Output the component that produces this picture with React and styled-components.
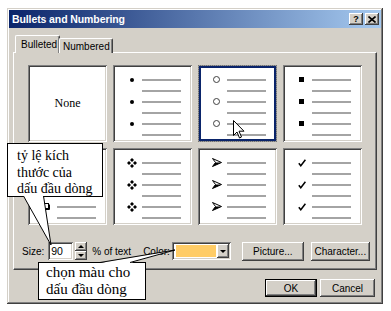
import React from 'react';
import styled, { createGlobalStyle } from 'styled-components';

const Global = createGlobalStyle`
  html, body { margin: 0; padding: 0; background: #fff; }
  body { font-family: "Liberation Sans", Arial, sans-serif; font-size: 10px; color: #000; }
`;

const raised = `box-shadow: inset -1px -1px #404040, inset 1px 1px #fff, inset -2px -2px #808080, inset 2px 2px #d4d0c8;`;
const sunken = `box-shadow: inset 1px 1px #808080, inset -1px -1px #fff, inset 2px 2px #404040, inset -2px -2px #d4d0c8;`;

const Page = styled.div`
  position: relative;
  width: 391px;
  height: 311px;
  padding: 8px 0 0 7px;
  box-sizing: border-box;
  overflow: hidden;
`;

const Dialog = styled.div`
  width: 376px;
  height: 296px;
  box-sizing: border-box;
  background: #d4d0c8;
  padding: 2px;
  box-shadow: inset -1px -1px #404040, inset 1px 1px #d4d0c8, inset -2px -2px #808080, inset 2px 2px #fff;
  display: flex;
  flex-direction: column;
`;

const TitleBar = styled.div`
  height: 18px;
  flex: none;
  display: flex;
  align-items: center;
  padding: 0 2px 0 3px;
  background: linear-gradient(to right, #0a246a, #a6caf0);
`;

const Title = styled.div`
  flex: 1;
  color: #fff;
  font-weight: bold;
  font-size: 10.5px;
  letter-spacing: -0.1px;
`;

const TitleBtn = styled.div`
  width: 14px;
  height: 12px;
  margin-left: 2px;
  background: #d4d0c8;
  ${raised}
  display: flex;
  align-items: center;
  justify-content: center;
  font-weight: bold;
  font-size: 9px;
  line-height: 1;
`;

const Body = styled.div`
  flex: 1;
  display: flex;
  flex-direction: column;
  padding: 8px 4px 0 4px;
`;

const TabStrip = styled.div`
  display: flex;
  align-items: flex-end;
  padding-left: 2px;
  height: 17px;
  position: relative;
  z-index: 1;
  margin-bottom: -1px;
`;

const Tab = styled.div`
  box-sizing: border-box;
  height: ${p => (p.$active ? '18px' : '15px')};
  width: ${p => p.$w}px;
  padding: ${p => (p.$active ? '3px 0 0 5px' : '2px 0 0 3px')};
  margin-left: ${p => (p.$active ? '0' : '-1px')};
  background: #d4d0c8;
  border-top: 1px solid #fff;
  border-left: 1px solid #fff;
  border-right: 1px solid #404040;
  box-shadow: inset -1px 0 #808080;
  border-radius: 2px 2px 0 0;
  font-size: 10px;
  white-space: nowrap;
`;

const Panel = styled.div`
  height: 218px;
  box-sizing: border-box;
  border-top: 1px solid #fff;
  border-left: 1px solid #fff;
  border-right: 1px solid #404040;
  border-bottom: 1px solid #404040;
  box-shadow: inset -1px -1px #808080;
  padding: 12px 0 0 8px;
  display: flex;
  flex-direction: column;
`;

const Grid = styled.div`
  margin-left: 6px;
  display: grid;
  grid-template-columns: repeat(4, 79px);
  grid-template-rows: repeat(2, 77px);
  column-gap: 6px;
  row-gap: 6px;
`;

const Cell = styled.div`
  position: relative;
  box-sizing: border-box;
  background: #fff;
  padding-top: 9px;
  ${p => (p.$selected
    ? 'outline: 1px dotted #707070; outline-offset: -1px; box-shadow: inset 0 0 0 1px #9a9a9a, inset 0 0 0 3px #0a246a;'
    : sunken)}
`;

const NoneCell = styled(Cell)`
  padding: 0;
  display: flex;
  align-items: center;
  justify-content: center;
  font-family: "Liberation Serif", "Times New Roman", serif;
  font-size: 12px;
`;

const Row = styled.div`
  height: 11px;
  display: flex;
  align-items: center;
`;

const BulletSlot = styled.div`
  width: 13px;
  margin-left: 12px;
  display: flex;
  justify-content: center;
  align-items: center;
`;

const Line = styled.div`
  width: 39px;
  height: 2px;
  margin-left: 4px;
  background: #a4a4a4;
`;

const Dot = styled.span`
  width: 4px;
  height: 4px;
  border-radius: 50%;
  background: #000;
`;

const Ring = styled.span`
  width: 5px;
  height: 5px;
  border-radius: 50%;
  border: 1px solid #404040;
`;

const Square = styled.span`
  width: 5px;
  height: 5px;
  background: #000;
`;

const Controls = styled.div`
  margin-top: 17px;
  height: 18px;
  display: flex;
  align-items: center;
`;

const CtlLabel = styled.span`
  margin-left: ${p => p.$ml || 0}px;
  font-size: 10px;
  white-space: nowrap;
`;

const NumField = styled.div`
  margin-left: 4px;
  width: 25px;
  height: 18px;
  box-sizing: border-box;
  background: #fff;
  ${sunken}
  padding: 3px 0 0 3px;
  font-size: 10.5px;
`;

const Spinner = styled.div`
  margin-left: 2px;
  width: 12px;
  height: 18px;
  display: flex;
  flex-direction: column;
`;

const SpinBtn = styled.div`
  flex: 1;
  background: #d4d0c8;
  ${raised}
  display: flex;
  align-items: center;
  justify-content: center;
  &::after {
    content: '';
    border-left: 3px solid transparent;
    border-right: 3px solid transparent;
    ${p => (p.$up ? 'border-bottom: 3px solid #000;' : 'border-top: 3px solid #000;')}
  }
`;

const ColorCombo = styled.div`
  margin-left: 2px;
  width: 59px;
  height: 18px;
  box-sizing: border-box;
  background: #fff;
  ${sunken}
  padding: 2px;
  display: flex;
`;

const Swatch = styled.div`
  flex: 1;
  margin: 1px 1px 1px 2px;
  background: #ffcc66;
`;

const DropBtn = styled.div`
  width: 12px;
  background: #d4d0c8;
  ${raised}
  display: flex;
  align-items: center;
  justify-content: center;
  &::after {
    content: '';
    border-left: 3px solid transparent;
    border-right: 3px solid transparent;
    border-top: 3px solid #000;
  }
`;

const Button = styled.div`
  width: ${p => p.$w}px;
  height: ${p => p.$h || 19}px;
  margin-left: ${p => p.$ml || 0}px;
  box-sizing: border-box;
  background: #d4d0c8;
  ${p => (p.$default
    ? 'border: 1px solid #000; box-shadow: inset -1px -1px #404040, inset 1px 1px #fff, inset -2px -2px #808080;'
    : raised)}
  display: flex;
  align-items: center;
  justify-content: center;
  font-size: 10px;
  white-space: nowrap;
`;

const ButtonRow = styled.div`
  margin-top: 9px;
  padding-right: 2px;
  display: flex;
  justify-content: flex-end;
`;

const Callout = styled.div`
  position: absolute;
  left: ${p => p.$x}px;
  top: ${p => p.$y}px;
  width: ${p => p.$w}px;
  height: ${p => p.$h}px;
  box-sizing: border-box;
  background: #fff;
  border: 1px solid #000;
  padding: ${p => p.$pad};
  font-family: "Liberation Serif", "Times New Roman", serif;
  font-size: ${p => p.$fs}px;
  line-height: ${p => p.$lh}px;
  white-space: nowrap;
  z-index: 3;
`;

const Overlay = styled.svg`
  position: absolute;
  overflow: visible;
  z-index: 4;
`;

const Bullet = ({ kind }) => {
  switch (kind) {
    case 'dot': return <Dot />;
    case 'ring': return <Ring />;
    case 'square': return <Square />;
    case 'hsquare':
      return (
        <svg width="8" height="8" viewBox="0 0 8 8">
          <rect x="0.5" y="0.5" width="5" height="5" fill="#fff" stroke="#000" />
          <path d="M6.5 1.5 V6.5 H1.5" fill="none" stroke="#000" />
        </svg>
      );
    case 'diamonds':
      return (
        <svg width="10" height="10" viewBox="0 0 10 10">
          <path d="M5 0 L7 2 L5 4 L3 2 Z M5 6 L7 8 L5 10 L3 8 Z M2 3 L4 5 L2 7 L0 5 Z M8 3 L10 5 L8 7 L6 5 Z" fill="#000" />
        </svg>
      );
    case 'arrow':
      return (
        <svg width="10" height="9" viewBox="0 0 10 9">
          <path d="M0.5 0.5 L9.5 4.5 L0.5 8.5 L3.5 4.5 Z" fill="#fff" stroke="#000" strokeWidth="1" strokeLinejoin="miter" />
          <path d="M3.5 4.5 L9.5 4.5 L0.5 8.5 Z" fill="#000" />
        </svg>
      );
    case 'check':
      return (
        <svg width="8" height="8" viewBox="0 0 8 8">
          <path d="M0.8 4.2 L2.8 6.8 L7.4 0.8" fill="none" stroke="#000" strokeWidth="1.5" />
        </svg>
      );
    default: return null;
  }
};

const BulletCell = ({ kind, selected }) => (
  <Cell $selected={selected}>
    {[0, 1, 2, 3, 4, 5].map(i => (
      <Row key={i}>
        <BulletSlot>{i % 2 === 0 ? <Bullet kind={kind} /> : null}</BulletSlot>
        <Line />
      </Row>
    ))}
  </Cell>
);

export default function App() {
  return (
    <>
      <Global />
      <Page>
        <Dialog>
          <TitleBar>
            <Title>Bullets and Numbering</Title>
            <TitleBtn>?</TitleBtn>
            <TitleBtn>
              <svg width="8" height="7" viewBox="0 0 8 7">
                <path d="M0.5 0.5 L7.5 6.5 M7.5 0.5 L0.5 6.5" stroke="#000" strokeWidth="1.6" />
              </svg>
            </TitleBtn>
          </TitleBar>
          <Body>
            <TabStrip>
              <Tab $active $w={45}>Bulleted</Tab>
              <Tab $w={54}>Numbered</Tab>
            </TabStrip>
            <Panel>
              <Grid>
                <NoneCell>None</NoneCell>
                <BulletCell kind="dot" />
                <BulletCell kind="ring" selected />
                <BulletCell kind="square" />
                <BulletCell kind="hsquare" />
                <BulletCell kind="diamonds" />
                <BulletCell kind="arrow" />
                <BulletCell kind="check" />
              </Grid>
              <Controls>
                <CtlLabel>Size:</CtlLabel>
                <NumField>90</NumField>
                <Spinner>
                  <SpinBtn $up />
                  <SpinBtn />
                </Spinner>
                <CtlLabel $ml={5}>% of text</CtlLabel>
                <CtlLabel $ml={12}>Color:</CtlLabel>
                <ColorCombo>
                  <Swatch />
                  <DropBtn />
                </ColorCombo>
                <Button $w={62} $ml={11}>Picture...</Button>
                <Button $w={59} $ml={7}>Character...</Button>
              </Controls>
            </Panel>
            <ButtonRow>
              <Button $default $w={52} $h={18}>OK</Button>
              <Button $w={55} $h={18} $ml={3}>Cancel</Button>
            </ButtonRow>
          </Body>
        </Dialog>

        <Overlay width="12" height="19" viewBox="0 0 12 19" style={{ left: 233, top: 120 }}>
          <path d="M0.5 0.5 L0.5 15.5 L4 12 L6.5 18 L8.5 17 L6 11.2 L11 11.2 Z" fill="#fff" stroke="#000" strokeWidth="1" strokeLinejoin="miter" />
        </Overlay>

        <Callout $x={7} $y={143} $w={96} $h={54} $pad="4px 0 0 9px" $fs={14} $lh={16.5}>
          tỷ lệ kích<br />thước của<br />dấu đầu dòng
        </Callout>
        <Overlay width="35" height="52" viewBox="0 0 35 52" style={{ left: 20, top: 196 }}>
          <polygon points="3.5,0 23.5,0 31,49" fill="#fff" />
          <path d="M3.5 0 L31 49 M23.5 0 L31 49" stroke="#000" strokeWidth="1" fill="none" />
        </Overlay>

        <Callout $x={38} $y={262} $w={108} $h={38} $pad="1px 0 0 7px" $fs={15} $lh={17}>
          chọn màu cho<br />dấu đầu dòng
        </Callout>
        <Overlay width="80" height="16" viewBox="0 0 80 16" style={{ left: 98, top: 248 }}>
          <polygon points="2,15 32,15 77,2" fill="#fff" />
          <path d="M2 14.5 L77 2 M32 14.5 L77 2" stroke="#000" strokeWidth="1" fill="none" />
        </Overlay>
      </Page>
    </>
  );
}
